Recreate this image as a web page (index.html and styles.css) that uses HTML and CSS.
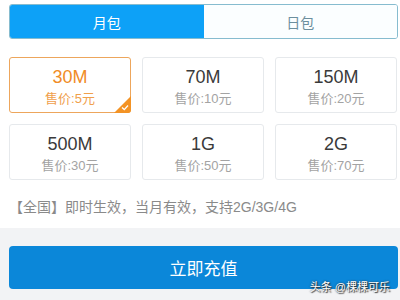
FILE: index.html
```
<!DOCTYPE html>
<html lang="zh-CN">
<head>
    <meta charset="UTF-8">
    <meta name="viewport" content="width=device-width, initial-scale=1.0">
    <title>流量充值</title>
    <link rel="stylesheet" href="styles.css">
</head>
<body>
    <div class="main">
        <div class="tabs">
            <div class="tab active">月包</div>
            <div class="tab">日包</div>
        </div>

        <div class="packages">
            <div class="package selected">
                <div class="size">30M</div>
                <div class="price">售价:5元</div>
                <svg class="check" width="17" height="17" viewBox="0 0 17 17">
                    <path d="M17 0 L17 14 Q17 17 14 17 L0 17 Z" fill="#f39325"/>
                    <path d="M8 11.5 L10.3 13.6 L14 9.5" fill="none" stroke="#fff" stroke-width="1.3"/>
                </svg>
            </div>
            <div class="package">
                <div class="size">70M</div>
                <div class="price">售价:10元</div>
            </div>
            <div class="package">
                <div class="size">150M</div>
                <div class="price">售价:20元</div>
            </div>
            <div class="package">
                <div class="size">500M</div>
                <div class="price">售价:30元</div>
            </div>
            <div class="package">
                <div class="size">1G</div>
                <div class="price">售价:50元</div>
            </div>
            <div class="package">
                <div class="size">2G</div>
                <div class="price">售价:70元</div>
            </div>
        </div>

        <div class="note">【全国】即时生效，当月有效，支持2G/3G/4G</div>
    </div>

    <div class="footer">
        <button class="pay-btn">立即充值</button>
        <div class="watermark">头条 @棵棵可乐</div>
    </div>
</body>
</html>
```

FILE: styles.css
```
body, html {
    margin: 0;
    padding: 0;
    width: 100%;
    height: 100%;
    overflow: hidden;
    background-color: #FFF;
    font-family: "Liberation Sans", "Noto Sans CJK SC", sans-serif;
}

.main {
    padding: 4px 2px 0 9px;
    height: 224px;
}

.tabs {
    display: flex;
    height: 35px;
    border: 1px solid #86bccf;
    border-radius: 3px;
    box-sizing: border-box;
    overflow: hidden;
}

.tab {
    flex: 1;
    display: flex;
    justify-content: center;
    align-items: center;
    font-size: 14px;
    color: #6c8f9e;
    background-color: #fbfeff;
}

.tab.active {
    background-color: #0da1f7;
    color: #FFF;
}

.packages {
    display: grid;
    grid-template-columns: repeat(3, 1fr);
    grid-auto-rows: 56px;
    gap: 11px;
    margin-top: 18px;
    padding-right: 1px;
}

.package {
    position: relative;
    border: 1px solid #e6e9ec;
    border-radius: 3px;
    display: flex;
    flex-direction: column;
    align-items: center;
    justify-content: center;
    box-sizing: border-box;
    padding-top: 3px;
}

.package .size {
    font-size: 18px;
    color: #3a3a3a;
    line-height: 22px;
}

.package .price {
    font-size: 13px;
    color: #a3a3a3;
    line-height: 18px;
    margin-top: 2px;
}

.package.selected {
    border-color: #eda65c;
}

.package.selected .size {
    color: #f08c26;
}

.package.selected .price {
    color: #f0a04c;
}

.check {
    position: absolute;
    right: -1px;
    bottom: -1px;
}

.note {
    margin-top: 17px;
    font-size: 14px;
    line-height: 20px;
    color: #8a8a8a;
}

.footer {
    position: relative;
    background-color: #f2f3f5;
    height: 76px;
    padding: 18px 2px 0 9px;
    box-sizing: border-box;
}

.pay-btn {
    display: block;
    width: 100%;
    height: 43px;
    border: none;
    border-radius: 4px;
    background-color: #0b87d9;
    color: #FFF;
    font-family: "Liberation Sans", "Noto Sans CJK SC", sans-serif;
    font-size: 17px;
}

.watermark {
    position: absolute;
    right: 10px;
    bottom: 10px;
    font-size: 11px;
    color: #FFF;
    text-shadow: 0 0 2px #333, 1px 1px 1px #333;
}
```
